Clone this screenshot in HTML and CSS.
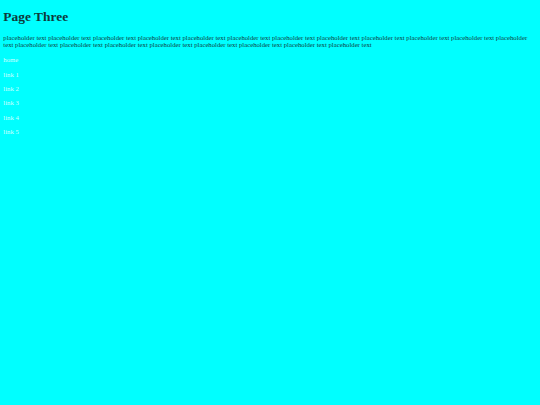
FILE: index.html
```html
<!DOCTYPE html>
<html>
<head>
<meta charset="utf-8">
<title>Page Three</title>
<link rel="stylesheet" href="styles.css">
</head>
<body>
<h1 class="title">Page Three</h1>
<p class="text">placeholder text placeholder text placeholder text placeholder text placeholder text placeholder text placeholder text placeholder text placeholder text placeholder text placeholder text placeholder text placeholder text placeholder text placeholder text placeholder text placeholder text placeholder text placeholder text placeholder text</p>
<nav class="nav">
<p class="nav-item"><a class="nav-link" href="#">home</a></p>
<p class="nav-item"><a class="nav-link" href="#">link 1</a></p>
<p class="nav-item"><a class="nav-link" href="#">link 2</a></p>
<p class="nav-item"><a class="nav-link" href="#">link 3</a></p>
<p class="nav-item"><a class="nav-link" href="#">link 4</a></p>
<p class="nav-item"><a class="nav-link" href="#">link 5</a></p>
</nav>
</body>
</html>
```
FILE: styles.css
```css
html {
  background: #00ffff;
}
body {
  margin: 3.36px;
  font-family: "Liberation Serif", "Times New Roman", serif;
  font-size: 6.72px;
  color: #123c3c;
}
.title {
  font-size: 2em;
  font-weight: bold;
  margin: 6px 0 9px;
  color: #0e3a3a;
}
.text {
  margin: 9px 0 8px;
}
.nav-item {
  margin: 7.3px 0;
}
.nav-link {
  color: #d0ffff;
  text-decoration: none;
}
```
